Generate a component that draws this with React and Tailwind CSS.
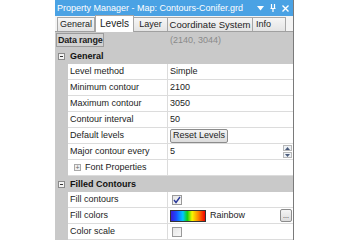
import React from 'react';

const font = { fontFamily: '"Liberation Sans", Arial, sans-serif' };

const Row = ({ label, children, indent }) => (
    <div className="flex h-[16px] border-b border-[#dcdcdc] bg-white">
        <div className={`w-[100px] shrink-0 border-r border-[#dcdcdc] flex items-center whitespace-nowrap ${indent ? 'pl-[5px]' : 'pl-[2px]'}`}>
            {label}
        </div>
        <div className="flex-1 flex items-center pl-[2px] pr-[1px] min-w-0">{children}</div>
    </div>
);

const Section = ({ title }) => (
    <div className="flex items-center h-[16px] bg-[#c9c9c9] pl-[3px] gap-[5px]">
        <span className="w-[7px] h-[7px] border border-[#8a8a8a] bg-[#f4f4f4] flex items-center justify-center">
            <span className="w-[3px] h-px bg-[#333]"></span>
        </span>
        <span className="font-bold text-[#111]">{title}</span>
    </div>
);

const Check = ({ on }) => (
    <span className="ml-[2px] w-[10px] h-[10px] border border-[#9a9a9a] bg-gradient-to-br from-[#e6e6e6] to-[#f8f8f8] flex items-center justify-center">
        {on && (
            <svg width="8" height="8" viewBox="0 0 8 8">
                <path d="M1 4 L3 6.5 L7 1" fill="none" stroke="#2a3a9a" strokeWidth="1.4" />
            </svg>
        )}
    </span>
);

const tab = "h-[14px] flex items-center justify-center border border-b-0 border-[#a7a7a7] bg-gradient-to-b from-[#f6f6f6] to-[#e4e4e4] whitespace-nowrap";

export default function App() {
    return (
        <div className="w-[350px] h-[240px] bg-white overflow-hidden text-[9px] text-[#1c1c1c] leading-none" style={font}>
            <div className="ml-[55px] w-[239px] h-[240px] flex flex-col border-r border-[#7a7a7a]">
                {/* title bar */}
                <div className="h-[16px] bg-[#4aa2e4] flex items-center pl-[2px] pr-[4px] text-white">
                    <span className="flex-1 truncate">Property Manager - Map: Contours-Conifer.grd</span>
                    <div className="flex items-center gap-[6px] text-[10px]">
                        <svg width="7" height="5" viewBox="0 0 7 5"><path d="M0 0 H7 L3.5 4.5 Z" fill="#fff" /></svg>
                        <svg width="6" height="8" viewBox="0 0 6 8"><path d="M1.5 0 V4 M4.5 0 V4 M0.5 4.5 H5.5 M3 4.5 V8" stroke="#fff" strokeWidth="1.2" fill="none" /></svg>
                        <svg width="7" height="7" viewBox="0 0 7 7"><path d="M0.5 0.5 L6.5 6.5 M6.5 0.5 L0.5 6.5" stroke="#fff" strokeWidth="1.4" /></svg>
                    </div>
                </div>
                {/* tabs */}
                <div className="h-[16px] bg-[#f4f4f4] flex items-end pl-[2px] border-b border-[#a0a0a0]">
                    <div className={`${tab} w-[38px]`}>General</div>
                    <div className="h-[17px] -mb-px w-[39px] flex items-center justify-center border border-b-0 border-[#a7a7a7] bg-white text-[10px]">Levels</div>
                    <div className={`${tab} w-[34px] border-l-0`}>Layer</div>
                    <div className={`${tab} w-[85px] border-l-0 text-[9.5px]`}>Coordinate System</div>
                    <div className={`${tab} w-[33px] border-l-0 justify-start pl-[3px]`}>Info</div>
                </div>
                {/* body */}
                <div className="flex-1 bg-[#c9c9c9] flex flex-col">
                    <div className="h-[16px] flex items-center pl-[1px]">
                        <span className="h-[14px] w-[48px] flex items-center pl-[1px] border border-[#9c9c9c] bg-[#d2d2d2] font-bold whitespace-nowrap tracking-[-0.2px]">Data range</span>
                        <span className="ml-[66px] text-[#8a8a8a]">(2140, 3044)</span>
                    </div>
                    <Section title="General" />
                    <div className="ml-[13px] flex flex-col">
                        <Row label="Level method">Simple</Row>
                        <Row label="Minimum contour">2100</Row>
                        <Row label="Maximum contour">3050</Row>
                        <Row label="Contour interval">50</Row>
                        <Row label="Default levels">
                            <span className="h-[14px] px-[2px] flex items-center rounded-[2px] border border-[#8c8c8c] bg-gradient-to-b from-[#f4f4f4] to-[#dcdcdc]">Reset Levels</span>
                        </Row>
                        <Row label="Major contour every">
                            <span className="flex-1">5</span>
                            <span className="flex flex-col gap-px">
                                <span className="w-[9px] h-[6px] border border-[#b8b8b8] bg-[#eef2f6] flex items-center justify-center">
                                    <svg width="5" height="3" viewBox="0 0 5 3"><path d="M0 3 H5 L2.5 0 Z" fill="#4a5a7a" /></svg>
                                </span>
                                <span className="w-[9px] h-[6px] border border-[#b8b8b8] bg-[#eef2f6] flex items-center justify-center">
                                    <svg width="5" height="3" viewBox="0 0 5 3"><path d="M0 0 H5 L2.5 3 Z" fill="#4a5a7a" /></svg>
                                </span>
                            </span>
                        </Row>
                        <Row label={
                            <span className="flex items-center gap-[4px] pl-[1px]">
                                <span className="w-[7px] h-[7px] border border-[#a8a8a8] bg-[#f0f0f0] flex items-center justify-center text-[7px] text-[#666]">+</span>
                                Font Properties
                            </span>
                        } indent />
                    </div>
                    <Section title="Filled Contours" />
                    <div className="ml-[13px] flex flex-col">
                        <Row label="Fill contours"><Check on /></Row>
                        <Row label="Fill colors">
                            <span className="w-[36px] h-[12px] border border-[#333] bg-[linear-gradient(to_right,#3a1ad8,#1a4cff_15%,#00c8ff_35%,#10d010_48%,#f8f800_62%,#ff8800_80%,#f00000)]"></span>
                            <span className="ml-[4px] flex-1">Rainbow</span>
                            <span className="w-[12px] h-[13px] rounded-[2px] border border-[#8c8c8c] bg-gradient-to-b from-[#f4f4f4] to-[#dcdcdc] flex items-end justify-center pb-[2px] text-[7px]">...</span>
                        </Row>
                        <Row label="Color scale"><Check /></Row>
                    </div>
                </div>
            </div>
        </div>
    );
}
